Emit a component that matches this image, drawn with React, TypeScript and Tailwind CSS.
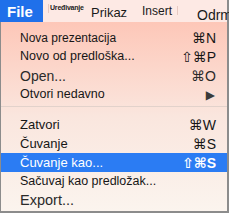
import React from "react";

const font = { fontFamily: '"Liberation Sans", "DejaVu Sans", Arial, sans-serif' };

type Item = { label: string; sc?: string; arrow?: boolean; size: string; color?: string; active?: boolean };

const group1: Item[] = [
  { label: "Nova prezentacija", sc: "⌘N", size: "text-[12px]" },
  { label: "Novo od predloška...", sc: "⇧⌘P", size: "text-[12.5px]" },
  { label: "Open...", sc: "⌘O", size: "text-[14px]", color: "text-[#2a2a2a]" },
  { label: "Otvori nedavno", arrow: true, size: "text-[12.5px]" },
];
const group2: Item[] = [
  { label: "Zatvori", sc: "⌘W", size: "text-[13px]" },
  { label: "Čuvanje", sc: "⌘S", size: "text-[13px]" },
  { label: "Čuvanje kao...", sc: "⇧⌘S", size: "text-[13px]", active: true },
  { label: "Sačuvaj kao predložak...", size: "text-[12.5px]" },
  { label: "Export...", size: "text-[14.5px]", color: "text-[#2a2a2a]" },
];

function Row({ it }: { it: Item }) {
  return (
    <div
      className={`h-[19px] flex items-center justify-between pl-[19px] pr-[11px] ${
        it.active ? "bg-[#2b7cf3] text-white" : it.color ?? "text-[#161616]"
      }`}
    >
      <span className={`${it.size} leading-none whitespace-nowrap`}>{it.label}</span>
      {it.sc && (
        <span className={`text-[14px] leading-none whitespace-nowrap ${it.active ? "font-bold" : ""}`}>{it.sc}</span>
      )}
      {it.arrow && <span className="text-[12px] leading-none text-[#3a3a3a] mr-[1px]">▶</span>}
    </div>
  );
}

export default function App() {
  return (
    <div className="w-[229px] h-[213px] overflow-hidden flex flex-col" style={font}>
      <div className="h-[22px] flex items-stretch bg-[#fde9e4] border-r-2 border-[#8c8c8c]">
        <div className="w-[43px] shrink-0 bg-[#1f70ea] flex items-center pl-[7px] text-white font-bold text-[15px] leading-none">
          File
        </div>
        <div className="w-px h-[9px] mt-[4px] ml-[5px] shrink-0 bg-[#e7c9c2]" />
        <div className="w-[33px] shrink-0 ml-[1px] pt-[4px] text-[7px] leading-none text-[#222] font-semibold tracking-[-0.2px] whitespace-nowrap">
          Uređivanje
        </div>
        <div className="w-[36px] shrink-0 ml-[8px] pt-[6px] text-[13px] leading-none text-[#1a1a1a]">Prikaz</div>
        <div className="w-[31px] shrink-0 ml-[15px] pt-[5px] text-[12px] leading-none text-[#1a1a1a]">Insert</div>
        <div className="w-px h-[9px] mt-[6px] ml-[4px] shrink-0 bg-[#e7c9c2]" />
        <div className="ml-[19px] pt-[8px] text-[14px] leading-none text-[#1a1a1a] whitespace-nowrap">Odrm</div>
      </div>
      <div className="flex-1 flex flex-col border-l border-r-2 border-b-2 border-[#8c8c8c] bg-gradient-to-b from-[#fdc7b8] via-[#fae6de] to-[#fbf4ee] pt-[6px] pb-px">
        {group1.map((it) => (
          <Row key={it.label} it={it} />
        ))}
        <div className="h-[11px] pt-[2px]">
          <div className="h-px bg-[#e2d2cb]" />
        </div>
        {group2.map((it) => (
          <Row key={it.label} it={it} />
        ))}
      </div>
    </div>
  );
}
